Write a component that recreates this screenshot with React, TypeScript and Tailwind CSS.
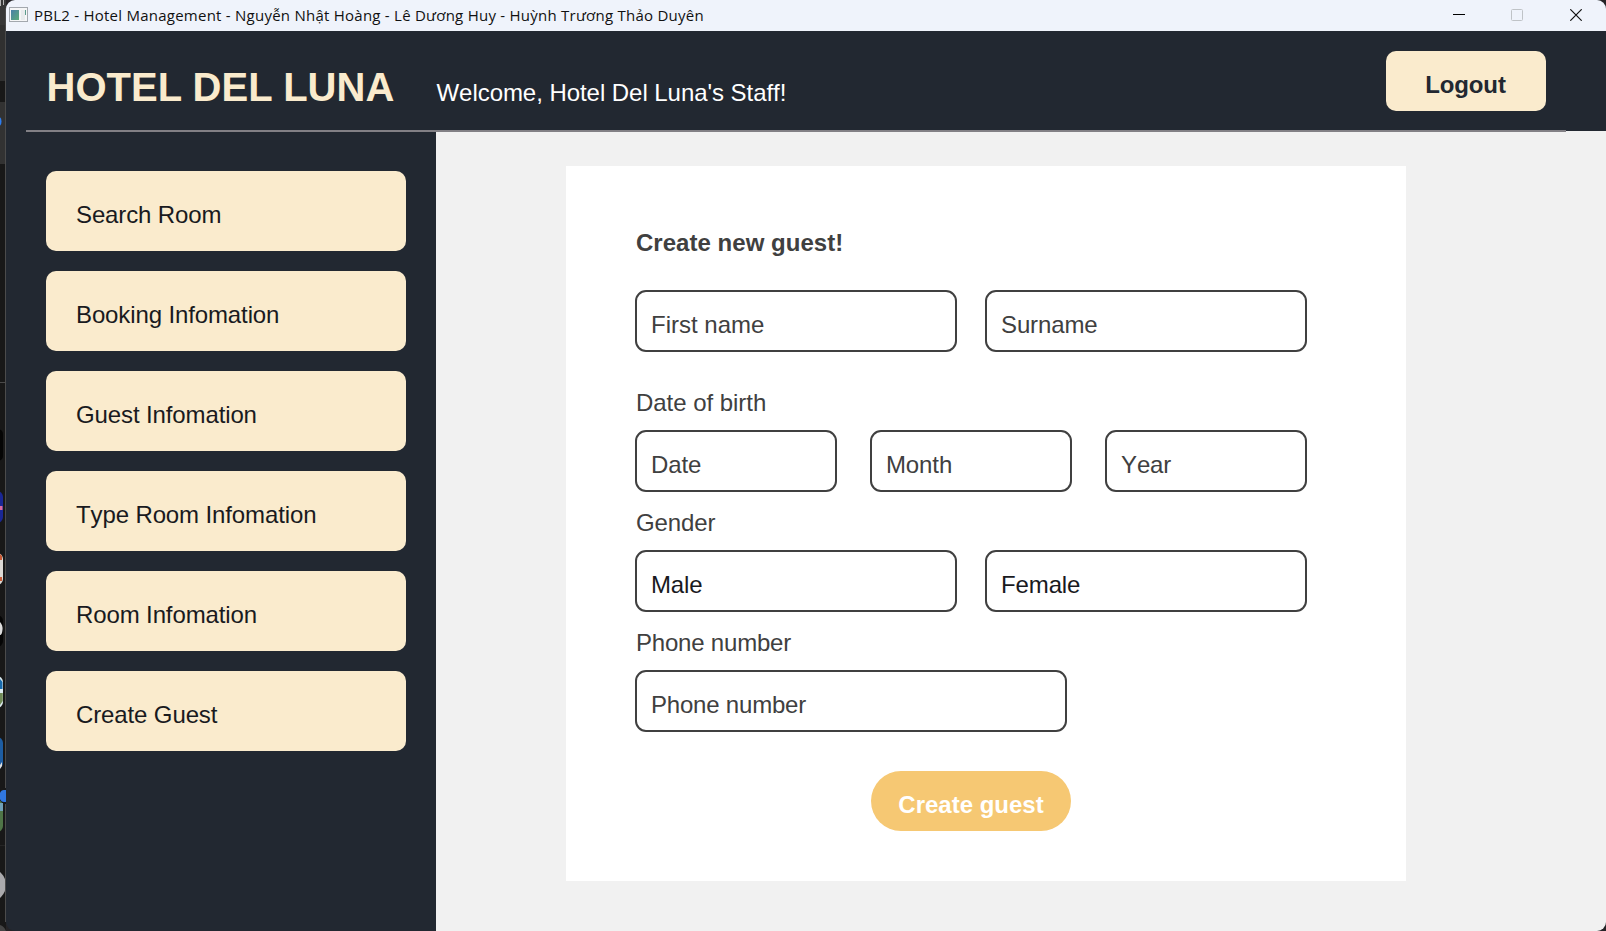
import React from "react";

const menu = [
  "Search Room",
  "Booking Infomation",
  "Guest Infomation",
  "Type Room Infomation",
  "Room Infomation",
  "Create Guest",
];

function DesktopEdge() {
  return (
    <svg width="6" height="931" viewBox="0 0 6 931" className="block shrink-0">
      <rect width="6" height="931" fill="#181818" />
      <rect width="6" height="25" fill="#373737" />
      <rect y="25" width="6" height="56" fill="#303030" />
      <rect y="102" width="6" height="62" fill="#323232" />
      <path d="M0.5 0V6M3.5 0V5" stroke="#b5b5b5" />
      <ellipse cx="-1" cy="121.500" rx="2.500" ry="4.500" fill="#2d7df0" />
      <rect y="382" width="6" height="1" fill="#4a4a4a" />
      <rect x="-9" y="429" width="12" height="32" rx="5" fill="#050505" />
      <rect x="-9" y="491" width="12" height="32" rx="6" fill="#1a2795" />
      <path d="M0 506h2.500v4H0z" fill="#d96aa0" />
      <rect x="-9" y="553" width="12" height="32" rx="6" fill="#dcd9d5" />
      <path d="M0 554l2 2v4H0zM0 577h2v4H0z" fill="#c95a35" />
      <rect x="-9" y="615" width="12" height="32" rx="6" fill="#050505" />
      <path d="M0 622q3 3 2.500 8t-2.500 5z" fill="#ddd" />
      <rect x="-9" y="676" width="12" height="32" rx="6" fill="#dcebf0" />
      <path d="M0 679l2.500 3v7H0z" fill="#186bae" />
      <path d="M0 693h2.800v8L0 705z" fill="#708b58" />
      <rect x="-9" y="737" width="12" height="32" rx="6" fill="#1d5da3" />
      <path d="M0 765l2-3v4l-2 3z" fill="#ddd" />
      <rect x="-9" y="800" width="12" height="32" rx="6" fill="#4f7547" />
      <rect y="803" width="3" height="8" fill="#6fa0b8" />
      <path d="M6 790H4Q1 790 0 793v6q1 3 4 3h2z" fill="#3077e0" />
      <rect y="845" width="6" height="1" fill="#252525" />
      <circle cx="-11" cy="885" r="17" fill="#aaaaad" />
      <path d="M0 925q4 1 6 6H0z" fill="#444" />
      <rect x="5" y="8" width="1" height="780" fill="#4b4b4b" />
      <rect x="5" y="804" width="1" height="118" fill="#4b4b4b" />
    </svg>
  );
}

function TitleBar() {
  return (
    <div className="flex h-[31px] shrink-0 items-center bg-[#eff3fb]">
      <svg width="19" height="15" viewBox="0 0 19 15" className="mb-[2px] ml-[3px]">
        <defs>
          <linearGradient id="pane" x1="0" y1="0" x2="1" y2="1">
            <stop offset="0" stopColor="#4a7fa8" />
            <stop offset="1" stopColor="#5cab78" />
          </linearGradient>
        </defs>
        <rect x="0.5" y="0.5" width="18" height="14" fill="#f5f6f7" stroke="#a3a8ae" />
        <rect x="2" y="3" width="8" height="10" fill="url(#pane)" />
        <rect x="12" y="3" width="4" height="10" fill="#e8ebed" />
        <rect x="16" y="3" width="1" height="5" fill="#5c9d8d" />
      </svg>
      <span className="ml-[6px] whitespace-nowrap font-['Open_Sans','Noto_Sans',sans-serif] text-[15px] leading-[31px] tracking-[0.245px] text-[#111]">
        PBL2 - Hotel Management - Nguyễn Nhật Hoàng - Lê Dương Huy - Huỳnh Trương Thảo Duyên
      </span>
      <div className="ml-auto mr-[24px] flex items-center">
        <svg width="12" height="12" viewBox="0 0 12 12" className="mb-px mr-[46px]">
          <path d="M0 5.500h12" stroke="#000" shapeRendering="crispEdges" />
        </svg>
        <svg width="12" height="12" viewBox="0 0 12 12" className="mb-px mr-[47px]">
          <rect x="0.5" y="0.5" width="11" height="11" rx="1" fill="none" stroke="#bfc3c7" />
        </svg>
        <svg width="12" height="12" viewBox="0 0 12 12" className="mb-px">
          <path d="M0.300 0.300l11.400 11.400M11.700 0.300l-11.400 11.400" stroke="#111" strokeWidth="1.2" />
        </svg>
      </div>
    </div>
  );
}

function Field({ text, size, dark }: { text: string; size: string; dark?: boolean }) {
  return (
    <div
      className={`h-[62px] shrink-0 whitespace-nowrap rounded-[11px] border-2 border-[#404040] pl-[14px] pt-[21px] ${size} ${dark ? "text-[#191a1e]" : "text-[#404040]"}`}
    >
      {text}
    </div>
  );
}

export default function App() {
  return (
    <div className="flex h-[931px] w-[1606px] overflow-hidden bg-[#252326] font-['Liberation_Sans',Arial,sans-serif] text-2xl leading-6 tracking-[-0.12px] [font-kerning:none]">
      <DesktopEdge />
      <div className="flex min-w-0 flex-1 flex-col overflow-hidden rounded-[9px] bg-[#222831]">
        <TitleBar />
        <header className="flex h-[99px] shrink-0 items-start pl-[40.5px] pr-[60px]">
          <h1 className="w-[390px] whitespace-nowrap pt-[36px] text-[40px] font-bold leading-10 tracking-[0.03px] text-[#faebcd] [font-kerning:auto]">
            HOTEL DEL LUNA
          </h1>
          <p className="whitespace-nowrap pt-[50px] tracking-[-0.05px] text-white">Welcome, Hotel Del Luna's Staff!</p>
          <button className="ml-auto mt-5 h-[60px] w-40 rounded-[10px] bg-[#faebcd] pr-px pt-[8px] font-bold text-[#222831]">
            Logout
          </button>
        </header>
        <div className="flex h-[2px] shrink-0">
          <div className="w-5" />
          <div className="w-[1540px] bg-[#828085]" />
          <div className="mt-px flex-1 bg-[#f1f1f1]" />
        </div>
        <div className="flex min-h-0 flex-1">
          <nav className="flex w-[430px] shrink-0 flex-col gap-5 pl-10 pt-[39px]">
            {menu.map((item) => (
              <button
                key={item}
                className="h-20 w-[360px] rounded-[10px] bg-[#faebcd] pl-[30px] pt-2 text-left text-[#191a1e]"
              >
                {item}
              </button>
            ))}
          </nav>
          <main className="flex-1 bg-[#f1f1f1] pl-[130px] pt-[34px]">
            <form className="h-[715px] w-[840px] bg-white pl-[69px] pt-[65px] text-[#404040]">
              <h2 className="pl-px font-bold tracking-[0.03px]">Create new guest!</h2>
              <div className="mt-[35px] flex gap-7">
                <Field text="First name" size="w-[322px] tracking-normal" />
                <Field text="Surname" size="w-[322px]" />
              </div>
              <div className="mt-[39px] pl-px tracking-[-0.04px]">Date of birth</div>
              <div className="mt-[15px] flex gap-[33px]">
                <Field text="Date" size="w-[202px]" />
                <Field text="Month" size="w-[202px]" />
                <Field text="Year" size="w-[202px]" />
              </div>
              <div className="mt-[19px] pl-px">Gender</div>
              <div className="mt-[15px] flex gap-7">
                <Field text="Male" size="w-[322px]" dark />
                <Field text="Female" size="w-[322px]" dark />
              </div>
              <div className="mt-[19px] pl-px tracking-[-0.2px]">Phone number</div>
              <div className="mt-[15px] flex">
                <Field text="Phone number" size="w-[432px] tracking-[-0.2px]" />
              </div>
              <button
                type="button"
                className="ml-[236px] mt-[39px] block h-[60px] w-[200px] rounded-full bg-[#f6c873] pt-[8px] font-bold tracking-normal text-white"
              >
                Create guest
              </button>
            </form>
          </main>
        </div>
      </div>
    </div>
  );
}
